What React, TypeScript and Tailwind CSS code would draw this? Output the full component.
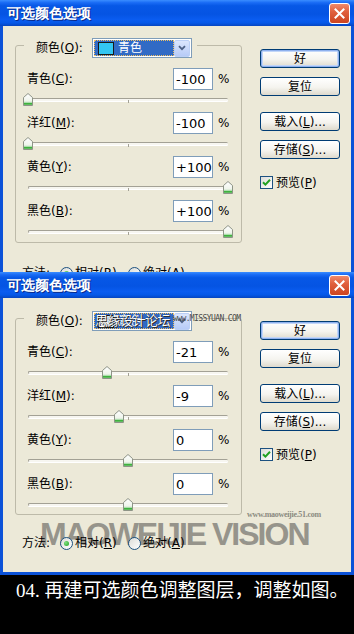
import React from "react";

type RowData = { label: string; k: string; value: string; pos: number };

const rows1: RowData[] = [
  { label: "青色", k: "C", value: "-100", pos: -100 },
  { label: "洋红", k: "M", value: "-100", pos: -100 },
  { label: "黄色", k: "Y", value: "+100", pos: 100 },
  { label: "黑色", k: "B", value: "+100", pos: 100 },
];

const rows2: RowData[] = [
  { label: "青色", k: "C", value: "-21", pos: -21 },
  { label: "洋红", k: "M", value: "-9", pos: -9 },
  { label: "黄色", k: "Y", value: "0", pos: 0 },
  { label: "黑色", k: "B", value: "0", pos: 0 },
];

function Mn({ text, k, tail = "" }: { text: string; k: string; tail?: string }) {
  return (
    <span className="whitespace-nowrap">
      {text}(<span className="underline underline-offset-[1px]">{k}</span>){tail}
    </span>
  );
}

function Thumb() {
  return (
    <svg width="10" height="13" viewBox="0 0 10 13">
      <defs>
        <linearGradient id="tg" x1="0" y1="0" x2="0" y2="1">
          <stop offset="0" stopColor="#ffffff" />
          <stop offset="1" stopColor="#e6eee0" />
        </linearGradient>
      </defs>
      <path d="M0.5 4.5 L5 0.5 L9.5 4.5 V12.5 H0.5 Z" fill="url(#tg)" stroke="#8e9487" />
      <path d="M1 10.8 H9" stroke="#3fb03f" strokeWidth="2" />
      <path d="M1 9.3 H9" stroke="#a6dca6" strokeWidth="1" />
    </svg>
  );
}

function Slider({ pos }: { pos: number }) {
  const left = pos + 100 - 5;
  return (
    <div className="relative ml-[12px] h-[22px] w-[200px]">
      <div className="absolute left-0 right-0 top-[8px] h-[3px] rounded-[2px] border-l border-t border-[#a3a195] bg-[#f7f6f0] shadow-[0_1px_0_#ffffff]" />
      <div className="absolute left-[100px] top-[10px] h-[3px] w-px bg-[#a3a195]" />
      <div className="absolute top-[3px] flex" style={{ left }}>
        <Thumb />
      </div>
    </div>
  );
}

function Btn({ children, def = false, mt = "" }: { children: React.ReactNode; def?: boolean; mt?: string }) {
  return (
    <div
      className={`flex h-[19px] w-[80px] items-center justify-center rounded-[3px] border border-[#003c74] bg-[linear-gradient(180deg,#ffffff_0%,#f5f4ef_55%,#dedacd_100%)] text-[12px] leading-none text-black ${
        def ? "shadow-[inset_0_0_0_1px_#8fb1ee,inset_0_0_0_2px_#c2d6f8]" : ""
      } ${mt}`}
    >
      {children}
    </div>
  );
}

function Checkbox() {
  return (
    <div className="flex h-[13px] w-[13px] items-center justify-center border border-[#1c5180] bg-[linear-gradient(135deg,#dcdcd7,#ffffff)]">
      <svg width="9" height="9" viewBox="0 0 9 9">
        <path d="M1 4.2 L3.4 6.6 L8 1.8" fill="none" stroke="#21a121" strokeWidth="2" />
      </svg>
    </div>
  );
}

function Radio({ on }: { on: boolean }) {
  return (
    <div className="flex h-[13px] w-[13px] items-center justify-center rounded-full border border-[#1c5180] bg-[linear-gradient(135deg,#dcdcd7,#ffffff)]">
      {on && <div className="h-[5px] w-[5px] rounded-full bg-[radial-gradient(circle_at_35%_35%,#7fe07f,#21a121)]" />}
    </div>
  );
}

function Dropdown({ alt }: { alt: boolean }) {
  return (
    <div className="relative flex h-[20px] w-[100px] items-center border border-[#7f9db9] bg-white p-[1px]">
      <div className="flex h-full w-[80px] items-center gap-[4px] border border-dotted border-[#f0c060] bg-[#316ac5] pl-[3px]">
        <div
          className={`h-[13px] w-[16px] border border-[#1a1a1a] ${alt ? "bg-white" : "bg-[#33c6f2]"}`}
        />
        <span className="text-[12px] leading-none text-white">青色</span>
      </div>
      <div className="ml-auto flex h-[17px] w-[16px] items-center justify-center rounded-[2px] border border-[#bcd0f6] bg-[linear-gradient(180deg,#dbe6fd,#b7cbf7)]">
        <svg width="8" height="6" viewBox="0 0 8 6">
          <path d="M1 1.2 L4 4.2 L7 1.2" fill="none" stroke="#4d6185" strokeWidth="1.8" />
        </svg>
      </div>
      {alt && (
        <>
          <div className="absolute left-[2px] top-[1px] whitespace-nowrap text-[13px] leading-[16px] tracking-[-0.5px] text-white [text-shadow:0_0_1px_#000,1px_1px_0_#333]">
            思缘设计论坛
          </div>
          <div className="absolute left-[80px] top-[2px] whitespace-nowrap font-['DejaVu_Sans_Mono',monospace] text-[8px] leading-[9px] tracking-[-0.6px] text-[#4a4a4a]">
            www.MISSYUAN.COM
          </div>
        </>
      )}
    </div>
  );
}

function Dialog({ rows, alt }: { rows: RowData[]; alt: boolean }) {
  return (
    <div className="flex h-[303px] w-[354px] flex-col bg-[#0b52d8]">
      <div className="flex h-[26px] items-center bg-[linear-gradient(180deg,#3a8dff_0%,#1a6cf5_10%,#0758e6_22%,#0554e3_55%,#0a5cf0_75%,#0558e8_88%,#0645c0_100%)] pl-[7px] pr-[4px]">
        <span className="text-[14px] font-bold leading-none text-white [text-shadow:1px_1px_0_#0a2a8a]">
          可选颜色选项
        </span>
        <div className="ml-auto flex h-[21px] w-[21px] items-center justify-center rounded-[3px] border border-white bg-[linear-gradient(180deg,#f08a6a_0%,#e0603e_40%,#cc4420_100%)]">
          <svg width="11" height="11" viewBox="0 0 11 11">
            <path d="M1.5 1.5 L9.5 9.5 M9.5 1.5 L1.5 9.5" stroke="#ffffff" strokeWidth="2" strokeLinecap="square" />
          </svg>
        </div>
      </div>
      <div className="relative mx-[3px] mb-[3px] flex flex-1 flex-col bg-[#ece9d8] font-['DejaVu_Sans','Noto_Sans_CJK_SC',sans-serif] text-black">
        <div className="flex items-start">
          <div className={`ml-[12px] ${alt ? "mt-[20px] h-[197px]" : "mt-[19px] h-[198px]"} w-[227px] rounded-[3px] border border-[#bdbaa9]`}>
            <div className="-mt-[8px] ml-[8px] flex h-[20px] w-fit items-center bg-[#ece9d8] pl-[12px] pr-[5px]">
              <span className="w-[56px] text-[12px] leading-none">
                <Mn text="颜色" k="O" tail=":" />
              </span>
              <Dropdown alt={alt} />
            </div>
            <div className="mt-[10px] flex flex-col">
              {rows.map((r) => (
                <div key={r.k} className="flex flex-col">
                  <div className="flex h-[22px] items-center pl-[11px] pr-[13px]">
                    <span className="flex-1 text-[12px] leading-none">
                      <Mn text={r.label} k={r.k} tail=":" />
                    </span>
                    <div className="flex h-[22px] w-[40px] items-center border border-[#7f9db9] bg-white pl-[2px] text-[13px] leading-none">
                      {r.value}
                    </div>
                    <span className="ml-[5px] w-[10px] text-[12px] leading-none">%</span>
                  </div>
                  <Slider pos={r.pos} />
                </div>
              ))}
            </div>
          </div>
          <div className="ml-[18px] mt-[23px] flex w-[80px] flex-col">
            <Btn def>好</Btn>
            <Btn mt="mt-[9px]">复位</Btn>
            <Btn mt="mt-[16px]">
              <Mn text="载入" k="L" tail="..." />
            </Btn>
            <Btn mt="mt-[9px]">
              <Mn text="存储" k="S" tail="..." />
            </Btn>
            <div className="mt-[17px] flex items-center gap-[3px] text-[12px] leading-none">
              <Checkbox />
              <Mn text="预览" k="P" />
            </div>
          </div>
        </div>
        {alt && (
          <>
            <div className="absolute left-[244px] top-[213px] whitespace-nowrap font-['Liberation_Serif',serif] text-[8px] font-bold leading-none tracking-[-0.3px] text-[#8a8980]">
              www.maoweijie.51.com
            </div>
            <div className="absolute left-[37px] top-[220px] whitespace-nowrap font-['Liberation_Sans',sans-serif] text-[32px] font-bold leading-[32px] tracking-[-2px] text-[#96948b]">
              MAOWEIJIE VISION
            </div>
          </>
        )}
        <div className={`relative z-10 ${alt ? "mt-[20px]" : "mt-[22px]"} flex h-[16px] items-center pl-[19px] text-[12px] leading-none`}>
          <span className="w-[38px]">方法:</span>
          <Radio on />
          <span className="ml-[2px] w-[53px]">
            <Mn text="相对" k="R" />
          </span>
          <Radio on={false} />
          <span className="ml-[2px]">
            <Mn text="绝对" k="A" />
          </span>
        </div>
      </div>
    </div>
  );
}

export default function App() {
  return (
    <div className="flex h-[634px] w-[354px] flex-col overflow-hidden bg-black">
      <div className="h-[272px] shrink-0 overflow-hidden">
        <Dialog rows={rows1} alt={false} />
      </div>
      <div className="shrink-0">
        <Dialog rows={rows2} alt />
      </div>
      <div className="flex-1 bg-black pl-[16px] pt-[4px]">
        <span className="whitespace-nowrap font-['Liberation_Serif','Noto_Sans_CJK_SC',serif] text-[19px] leading-[24px] text-white">
          04. 再建可选颜色调整图层，调整如图。
        </span>
      </div>
    </div>
  );
}
